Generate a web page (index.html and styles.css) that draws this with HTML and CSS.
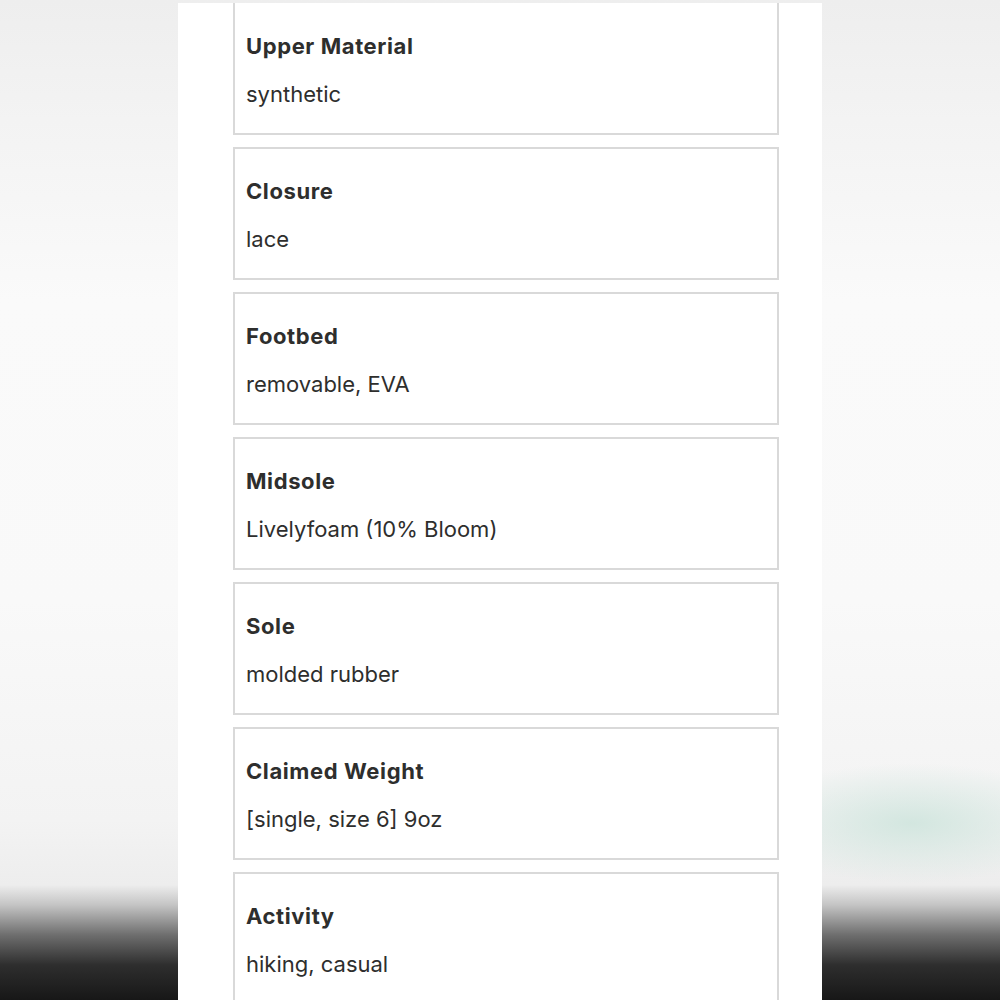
FILE: index.html
```html
<!DOCTYPE html>
<html lang="en">
<head>
  <meta charset="UTF-8">
  <meta name="viewport" content="width=device-width, initial-scale=1.0">
  <title>Product Specs</title>
  <link rel="stylesheet" href="styles.css">
</head>
<body>
  <div class="backdrop">
    <div class="sheet">
      <div class="spec spec-first">
        <h3 class="spec-name">Upper Material</h3>
        <p class="spec-value">synthetic</p>
      </div>
      <div class="spec">
        <h3 class="spec-name">Closure</h3>
        <p class="spec-value">lace</p>
      </div>
      <div class="spec">
        <h3 class="spec-name">Footbed</h3>
        <p class="spec-value">removable, EVA</p>
      </div>
      <div class="spec">
        <h3 class="spec-name">Midsole</h3>
        <p class="spec-value">Livelyfoam (10% Bloom)</p>
      </div>
      <div class="spec">
        <h3 class="spec-name">Sole</h3>
        <p class="spec-value">molded rubber</p>
      </div>
      <div class="spec">
        <h3 class="spec-name">Claimed Weight</h3>
        <p class="spec-value">[single, size 6] 9oz</p>
      </div>
      <div class="spec">
        <h3 class="spec-name">Activity</h3>
        <p class="spec-value">hiking, casual</p>
      </div>
    </div>
  </div>
</body>
</html>
```

FILE: styles.css
```css
html, body {
  margin: 0;
  height: 100%;
}
body {
  font-family: Inter, "Noto Sans", sans-serif;
  color: #2e2e2d;
}
.backdrop {
  height: 100vh;
  overflow: hidden;
  padding-top: 3px;
  box-sizing: border-box;
  background:
    radial-gradient(ellipse 170px 60px at 912px 823px, rgba(205, 228, 220, 0.85), rgba(225, 238, 233, 0) 100%),
    linear-gradient(to bottom, #eeeeee 0, #f3f3f3 120px, #fafafa 300px, #f9f9f9 600px, #f3f3f3 820px, #ededed 885px, #c4c4c4 905px, #6e6e6e 935px, #2e2e2e 965px, #171717 1000px);
}
.sheet {
  width: 644px;
  margin: 0 auto;
  height: 100%;
  background-color: #fff;
  padding: 0 43px 0 55px;
  box-sizing: border-box;
}
.spec {
  border: 2px solid #d9d9d9;
  padding: 26px 11px 23px;
  margin-bottom: 12px;
}
.spec-first {
  border-top: 0;
  padding-top: 27px;
}
.spec-name {
  margin: 0 0 16px;
  font-size: 22px;
  line-height: 32px;
  font-weight: 700;
  letter-spacing: 0.6px;
}
.spec-value {
  margin: 0;
  font-size: 22px;
  line-height: 32px;
  font-weight: 400;
}
```
